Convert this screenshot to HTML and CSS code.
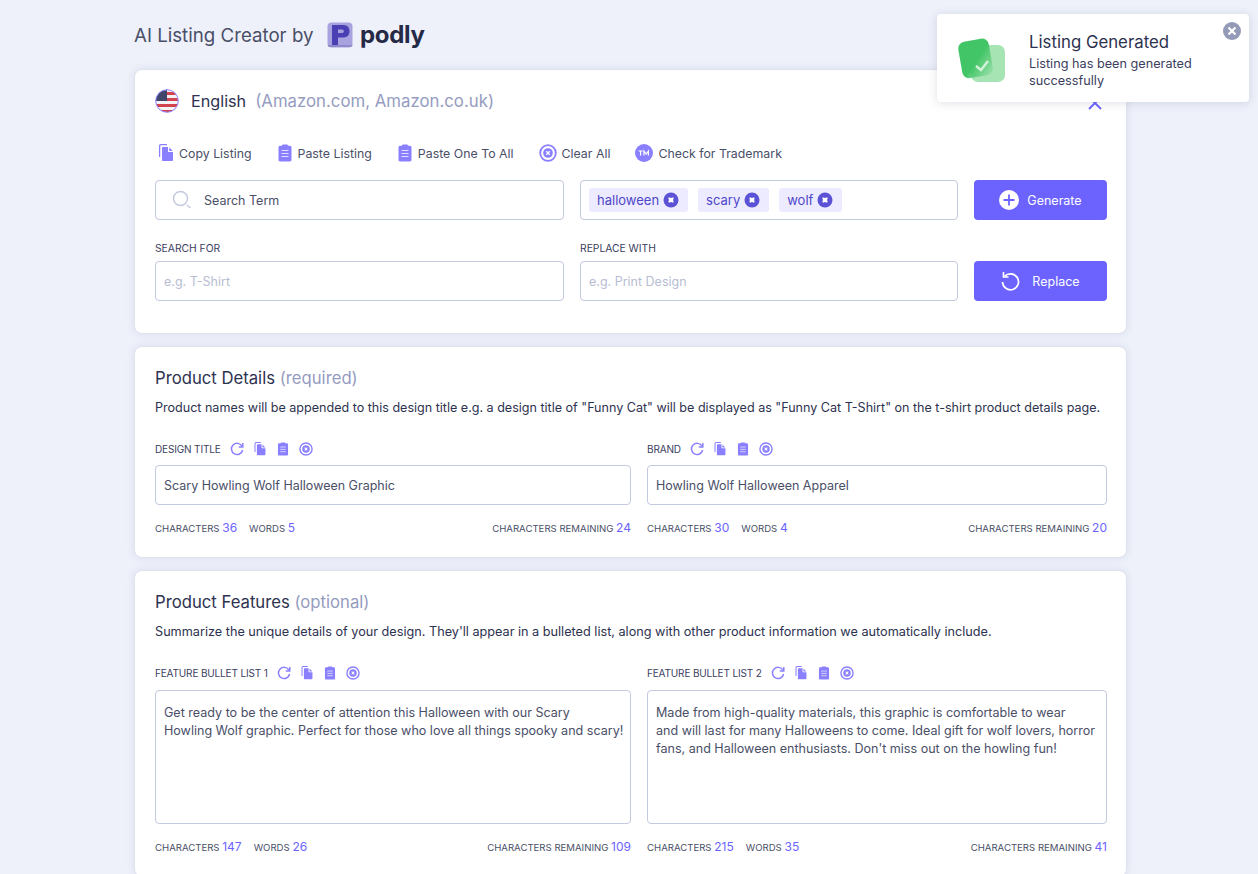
FILE: index.html
```html
<!DOCTYPE html>
<html lang="en">
<head>
  <meta charset="UTF-8">
  <meta name="viewport" content="width=device-width, initial-scale=1.0">
  <title>AI Listing Creator by podly</title>
  <link rel="stylesheet" href="styles.css">
</head>
<body>
  <svg class="defs" width="0" height="0">
    <symbol id="i-copy" viewBox="0 0 16 18">
      <path d="M1.6 13V2.2C1.6 1.3 2.3.6 3.2.6H9" fill="none" stroke="currentColor" stroke-width="1.3"/>
      <path d="M5 3h5v4.2c0 .5.4.9.9.9H15v7.9c0 .6-.5 1-1 1H5c-.6 0-1-.4-1-1V4c0-.6.4-1 1-1zm6.200.3L14.800 7h-3.600z" fill="currentColor"/>
    </symbol>
    <symbol id="i-paste" viewBox="0 0 14 18">
      <path d="M4 1.700C4 1 4.600.5 5.200.5h3.600c.6 0 1.200.5 1.200 1.200h1.800c1 0 1.700.8 1.700 1.700v12.400c0 1-.8 1.700-1.700 1.700H2.200c-1 0-1.700-.8-1.700-1.700V3.400c0-1 .8-1.700 1.700-1.700z" fill="currentColor"/>
      <path d="M3.500 6.500h7M3.500 9.500h7M3.500 12.500h7" stroke="#fff" stroke-width="1.100" opacity=".75"/>
    </symbol>
    <symbol id="i-clear" viewBox="0 0 18 18">
      <circle cx="9" cy="9" r="7.800" fill="none" stroke="currentColor" stroke-width="1.800"/>
      <circle cx="9" cy="9" r="4.800" fill="currentColor"/>
      <path d="M7.300 7.300l3.400 3.400m0-3.400l-3.400 3.400" stroke="#fff" stroke-width="1.300"/>
    </symbol>
    <symbol id="i-tagx" viewBox="0 0 16 16">
      <circle cx="8" cy="8" r="7.500" fill="currentColor"/>
      <path d="M5.500 5.500h5v5h-5z" fill="#fff"/>
      <path d="M8 4.500v1.500M8 10v1.500M4.500 8H6M10 8h1.500" stroke="currentColor" stroke-width="1.200"/>
    </symbol>
    <symbol id="i-redo" viewBox="0 0 14 14">
      <path d="M12 4.200A5.600 5.600 0 1 0 12.600 8" fill="none" stroke="currentColor" stroke-width="1.500"/>
      <path d="M12.800 1v4h-4" fill="none" stroke="currentColor" stroke-width="1.500"/>
    </symbol>
    <linearGradient id="toast-front" x1="0.2" y1="0.2" x2="0.9" y2="1">
      <stop offset="0.45" stop-color="#42c566"/>
      <stop offset="1" stop-color="#42c566" stop-opacity="0.15"/>
    </linearGradient>
  </svg>

  <div class="toast">
    <svg class="toast-icon" viewBox="0 0 48 48">
      <rect x="14" y="9" width="34" height="37" rx="7" fill="#a6e4b3"/>
      <rect x="3" y="4" width="31" height="37" rx="7" transform="rotate(-10 18 22)" fill="url(#toast-front)"/>
      <path d="M19 30l5 4 7-9" fill="none" stroke="#d3f2da" stroke-width="2.400"/>
    </svg>
    <div class="toast-text">
      <div class="toast-title">Listing Generated</div>
      <div class="toast-msg">Listing has been generated successfully</div>
    </div>
    <svg class="toast-close" viewBox="0 0 18 18">
      <circle cx="9" cy="9" r="9" fill="#939ab8"/>
      <path d="M5.500 5.500l7 7m0-7l-7 7" stroke="#fff" stroke-width="2.200"/>
    </svg>
  </div>

  <div class="page">
    <header class="top">
      <span class="top-title">AI Listing Creator by</span>
      <svg class="logo-mark" viewBox="0 0 26 26">
        <rect x="0.500" y="0.500" width="25" height="25" rx="4" fill="#a8a3de"/>
        <path d="M1 23v.5C1 24.500 2 25 3 25h20c1 0 2.500-.5 2.500-2z" fill="#8f89cc"/>
        <path d="M5 3h11.500c3.800 0 6 2.800 6 6.300S20.300 15.500 16.500 15.500H11V23H5zm6 4.500V11h4c1.200 0 1.800-.7 1.800-1.700s-.6-1.800-1.800-1.800z" fill="#4a40b4"/>
      </svg>
      <span class="logo-text">podly</span>
    </header>

    <section class="card card-head">
      <div class="lang-row">
        <svg class="flag" viewBox="0 0 24 24">
          <clipPath id="flag-clip"><circle cx="12" cy="12" r="11"/></clipPath>
          <g clip-path="url(#flag-clip)">
            <rect width="24" height="24" fill="#f3f3f5"/>
            <path d="M0 3h24v3H0zM0 9h24v3H0zM0 15h24v3H0zM0 21h24v3H0z" fill="#d2424f"/>
            <rect width="12" height="12" fill="#41476b"/>
          </g>
          <circle cx="12" cy="12" r="11.300" fill="none" stroke="#8a80ff" stroke-width="1"/>
        </svg>
        <span class="lang-name">English</span>
        <span class="lang-note">(Amazon.com, Amazon.co.uk)</span>
        <svg class="lang-x" viewBox="0 0 14 14"><path d="M1 1l12 12m0-12L1 13" stroke="#6c63ff" stroke-width="1.800"/></svg>
      </div>

      <div class="tools">
        <span class="tool"><svg class="ic ic-copy"><use href="#i-copy"/></svg>Copy Listing</span>
        <span class="tool"><svg class="ic ic-paste"><use href="#i-paste"/></svg>Paste Listing</span>
        <span class="tool"><svg class="ic ic-paste"><use href="#i-paste"/></svg>Paste One To All</span>
        <span class="tool"><svg class="ic ic-clear"><use href="#i-clear"/></svg>Clear All</span>
        <span class="tool">
          <svg class="ic ic-tm" viewBox="0 0 18 18">
            <circle cx="9" cy="9" r="9" fill="currentColor"/>
            <path d="M3.500 7h4.200M5.600 7v4.500M9 11.500V7l2.200 3 2.200-3v4.500" fill="none" stroke="#fff" stroke-width="1.200"/>
          </svg>Check for Trademark
        </span>
      </div>

      <div class="form-grid">
        <div class="box search-box">
          <svg class="search-ic" viewBox="0 0 20 20">
            <circle cx="8.500" cy="8.500" r="7" fill="none" stroke="#c3c9de" stroke-width="1.500"/>
            <path d="M15 15l3.500 3" stroke="#c3c9de" stroke-width="1.500"/>
          </svg>
          Search Term
        </div>
        <div class="box tag-box">
          <span class="tag">halloween<svg class="tag-x"><use href="#i-tagx"/></svg></span>
          <span class="tag">scary<svg class="tag-x"><use href="#i-tagx"/></svg></span>
          <span class="tag">wolf<svg class="tag-x"><use href="#i-tagx"/></svg></span>
        </div>
        <button class="btn">
          <svg class="btn-plus" viewBox="0 0 20 20">
            <circle cx="10" cy="10" r="10" fill="#fff"/>
            <path d="M10 4.500v11M4.500 10h11" stroke="#6c63ff" stroke-width="1.800"/>
          </svg>Generate
        </button>

        <div class="field">
          <label class="label">SEARCH FOR</label>
          <div class="box placeholder">e.g. T-Shirt</div>
        </div>
        <div class="field">
          <label class="label">REPLACE WITH</label>
          <div class="box placeholder">e.g. Print Design</div>
        </div>
        <button class="btn btn-replace">
          <svg class="btn-undo" viewBox="0 0 20 20">
            <path d="M3.500 5.500A8 8 0 1 1 1.500 11" fill="none" stroke="#fff" stroke-width="1.700"/>
            <path d="M2.500 1v5h5" fill="none" stroke="#fff" stroke-width="1.700"/>
          </svg>Replace
        </button>
      </div>
    </section>

    <section class="card">
      <h2 class="card-title">Product Details <span class="muted">(required)</span></h2>
      <p class="card-desc">Product names will be appended to this design title e.g. a design title of "Funny Cat" will be displayed as "Funny Cat T-Shirt" on the t-shirt product details page.</p>
      <div class="cols">
        <div>
          <div class="label-row">
            <span class="label">DESIGN TITLE</span>
            <svg class="mini mini-redo"><use href="#i-redo"/></svg>
            <svg class="mini"><use href="#i-copy"/></svg>
            <svg class="mini"><use href="#i-paste"/></svg>
            <svg class="mini"><use href="#i-clear"/></svg>
          </div>
          <div class="box value">Scary Howling Wolf Halloween Graphic</div>
          <div class="counts">
            <span class="count">CHARACTERS <b>36</b></span>
            <span class="count">WORDS <b>5</b></span>
            <span class="count count-right">CHARACTERS REMAINING <b>24</b></span>
          </div>
        </div>
        <div>
          <div class="label-row">
            <span class="label">BRAND</span>
            <svg class="mini mini-redo"><use href="#i-redo"/></svg>
            <svg class="mini"><use href="#i-copy"/></svg>
            <svg class="mini"><use href="#i-paste"/></svg>
            <svg class="mini"><use href="#i-clear"/></svg>
          </div>
          <div class="box value">Howling Wolf Halloween Apparel</div>
          <div class="counts">
            <span class="count">CHARACTERS <b>30</b></span>
            <span class="count">WORDS <b>4</b></span>
            <span class="count count-right">CHARACTERS REMAINING <b>20</b></span>
          </div>
        </div>
      </div>
    </section>

    <section class="card">
      <h2 class="card-title">Product Features <span class="muted">(optional)</span></h2>
      <p class="card-desc desc-wide">Summarize the unique details of your design. They'll appear in a bulleted list, along with other product information we automatically include.</p>
      <div class="cols">
        <div>
          <div class="label-row">
            <span class="label">FEATURE BULLET LIST 1</span>
            <svg class="mini mini-redo"><use href="#i-redo"/></svg>
            <svg class="mini"><use href="#i-copy"/></svg>
            <svg class="mini"><use href="#i-paste"/></svg>
            <svg class="mini"><use href="#i-clear"/></svg>
          </div>
          <div class="box area">Get ready to be the center of attention this Halloween with our Scary<br>Howling Wolf graphic. Perfect for those who love all things spooky and scary!</div>
          <div class="counts">
            <span class="count">CHARACTERS <b>147</b></span>
            <span class="count">WORDS <b>26</b></span>
            <span class="count count-right">CHARACTERS REMAINING <b>109</b></span>
          </div>
        </div>
        <div>
          <div class="label-row">
            <span class="label">FEATURE BULLET LIST 2</span>
            <svg class="mini mini-redo"><use href="#i-redo"/></svg>
            <svg class="mini"><use href="#i-copy"/></svg>
            <svg class="mini"><use href="#i-paste"/></svg>
            <svg class="mini"><use href="#i-clear"/></svg>
          </div>
          <div class="box area">Made from high-quality materials, this graphic is comfortable to wear<br>and will last for many Halloweens to come. Ideal gift for wolf lovers, horror<br>fans, and Halloween enthusiasts. Don't miss out on the howling fun!</div>
          <div class="counts">
            <span class="count">CHARACTERS <b>215</b></span>
            <span class="count">WORDS <b>35</b></span>
            <span class="count count-right">CHARACTERS REMAINING <b>41</b></span>
          </div>
        </div>
      </div>
    </section>
  </div>
</body>
</html>
```

FILE: styles.css
```css
html, body { margin: 0; height: 874px; overflow: hidden; }
body { font-family: "Inter", "Noto Sans", sans-serif; font-size: 12.5px; background: #eef1fa; color: #3b4060; }
.defs { position: absolute; }

.page { width: 993px; margin-left: 134px; }
.top { height: 69px; display: flex; align-items: center; }
.top-title { font-size: 18.7px; color: #4a4f68; width: 193px; margin-top: 1px; }
.logo-mark { width: 26px; height: 26px; }
.logo-text { font-size: 24px; font-weight: 700; color: #252a47; margin-left: 7px; letter-spacing: -0.3px; }

.card { background: #fff; border: 1px solid #dfe3ef; border-radius: 8px; padding: 20px; margin-bottom: 12px; box-shadow: 0 0 8px rgba(50,60,100,0.1); }
.card-head { padding-bottom: 21px; }

.lang-row { display: flex; align-items: center; height: 22px; position: relative; }
.flag { width: 24px; height: 24px; margin-right: 12px; }
.lang-name { font-size: 16.2px; color: #2d3250; margin-right: 9px; }
.lang-note { font-size: 16.8px; color: #959cc0; }
.lang-x { position: absolute; right: 4px; top: 6px; width: 14px; height: 14px; }

.tools { display: flex; gap: 25px; margin-top: 31px; height: 20px; padding-left: 3px; }
.tool { display: flex; align-items: center; gap: 5px; color: #4a4f68; font-size: 12.35px; white-space: nowrap; }
.ic { color: #8a80ff; height: 18px; flex: none; }
.ic-copy { width: 16px; }
.ic-paste { width: 16px; }
.ic-clear { width: 18px; }
.ic-tm { width: 18px; }

.form-grid { display: grid; grid-template-columns: 409px 378px 133px; gap: 20px 16px; margin-top: 17px; padding-bottom: 11px; align-items: end; }
.box { border: 1px solid #c3c9de; border-radius: 4px; box-sizing: border-box; height: 40px; display: flex; align-items: center; padding: 0 8px; background: #fff; }
.search-box { padding-left: 16px; color: #4a4f68; }
.search-ic { width: 20px; height: 20px; margin-right: 12px; }
.tag-box { gap: 10px; }
.tag { display: flex; align-items: center; gap: 4px; height: 24px; padding: 0 9px 0 8px; background: #ecebff; border-radius: 3px; color: #4f46c8; font-size: 13px; }
.tag-x { width: 16px; height: 16px; color: #5b52d6; }

.btn { height: 40px; border: 0; border-radius: 4px; background: #6c63ff; color: #fff; font: inherit; display: flex; align-items: center; justify-content: center; gap: 8px; }
.btn-plus { width: 20px; height: 20px; }
.btn-undo { width: 20px; height: 20px; }
.btn-replace { gap: 11px; }

.label { display: block; font-size: 10.3px; color: #3b4060; line-height: 16px; }
.field .label { margin-bottom: 5px; }
.placeholder { color: #b7bdd3; }

.card-title { margin: 0; font-size: 16.7px; font-weight: 400; line-height: 22px; color: #2d3250; }
.muted { color: #959cc0; }
.card-desc { margin: 10px 0 0; font-size: 12.55px; line-height: 18px; color: #2d3250; white-space: nowrap; }
.desc-wide { font-size: 12.68px; }

.cols { display: grid; grid-template-columns: 476px 460px; gap: 16px; margin-top: 24px; }
.label-row { display: flex; align-items: center; height: 16px; gap: 9px; }
.label-row .label { font-size: 10px; letter-spacing: -0.15px; }
.mini { width: 14px; height: 14px; color: #8a80ff; flex: none; }
.value { margin-top: 8px; }
.area { margin-top: 9px; height: 134px; display: block; padding: 13px 8px; line-height: 18px; font-size: 12.55px; white-space: nowrap; }
.value, .area { color: #4a4f68; }

.counts { display: flex; gap: 12px; margin-top: 13px; line-height: 20px; height: 19px; }
.count { font-size: 9.6px; color: #4a4f68; white-space: nowrap; }
.count b { font-size: 12px; font-weight: 400; color: #6c63ff; }
.count-right { margin-left: auto; }

.toast { position: absolute; left: 937px; top: 14px; width: 312px; height: 88px; box-sizing: border-box; background: #fff; border-radius: 4px; box-shadow: 0 1px 10px rgba(50,60,100,0.16); display: flex; align-items: center; z-index: 5; padding-left: 20px; padding-top: 4px; }
.toast-icon { width: 48px; height: 48px; margin-right: 24px; flex: none; }
.toast-title { font-size: 16.8px; color: #2d3250; line-height: 22px; margin-bottom: 2px; }
.toast-msg { font-size: 12.7px; line-height: 17px; color: #3b4060; width: 190px; }
.toast-close { position: absolute; right: 8px; top: 8px; width: 18px; height: 18px; }
```
